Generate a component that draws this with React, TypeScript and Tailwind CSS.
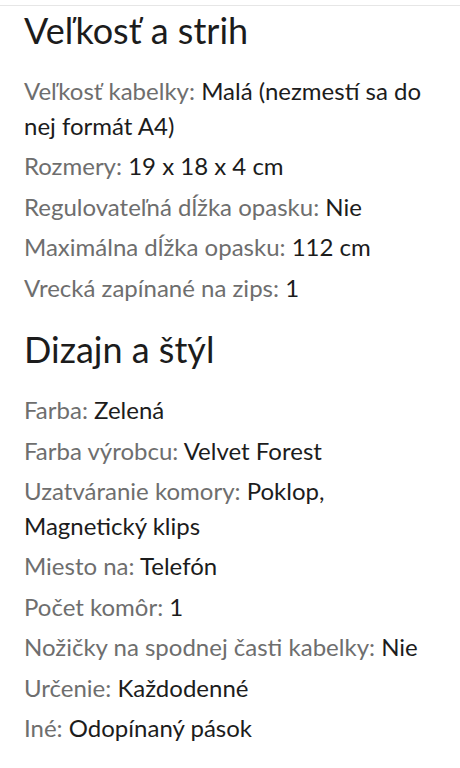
const sections = [
  {
    title: "Veľkosť a strih",
    rows: [
      ["Veľkosť kabelky", "Malá (nezmestí sa do nej formát A4)"],
      ["Rozmery", "19 x 18 x 4 cm"],
      ["Regulovateľná dĺžka opasku", "Nie"],
      ["Maximálna dĺžka opasku", "112 cm"],
      ["Vrecká zapínané na zips", "1"],
    ],
  },
  {
    title: "Dizajn a štýl",
    rows: [
      ["Farba", "Zelená"],
      ["Farba výrobcu", "Velvet Forest"],
      ["Uzatváranie komory", "Poklop, Magnetický klips"],
      ["Miesto na", "Telefón"],
      ["Počet komôr", "1"],
      ["Nožičky na spodnej časti kabelky", "Nie"],
      ["Určenie", "Každodenné"],
      ["Iné", "Odopínaný pások"],
    ],
  },
];

export default function App() {
  return (
    <div className="min-h-[768px] bg-white font-['Lato','Liberation_Sans',sans-serif]">
      <div className="pt-[5px]">
        <div className="h-px bg-[#e6e6e6]" />
      </div>
      <div className="flex flex-col gap-[24px] px-6 pt-[4px]">
        {sections.map((s) => (
          <section key={s.title}>
            <h2 className="mb-6 text-[36px] leading-[40px] text-[#1c1c1c]">{s.title}</h2>
            <div className="flex flex-col gap-[6px]">
              {s.rows.map(([label, value]) => (
                <p key={label} className="text-[24px] leading-[34.5px] text-[#1c1c1c]">
                  <span className="text-[#6e6e6e]">{label}:</span> {value}
                </p>
              ))}
            </div>
          </section>
        ))}
      </div>
    </div>
  );
}
